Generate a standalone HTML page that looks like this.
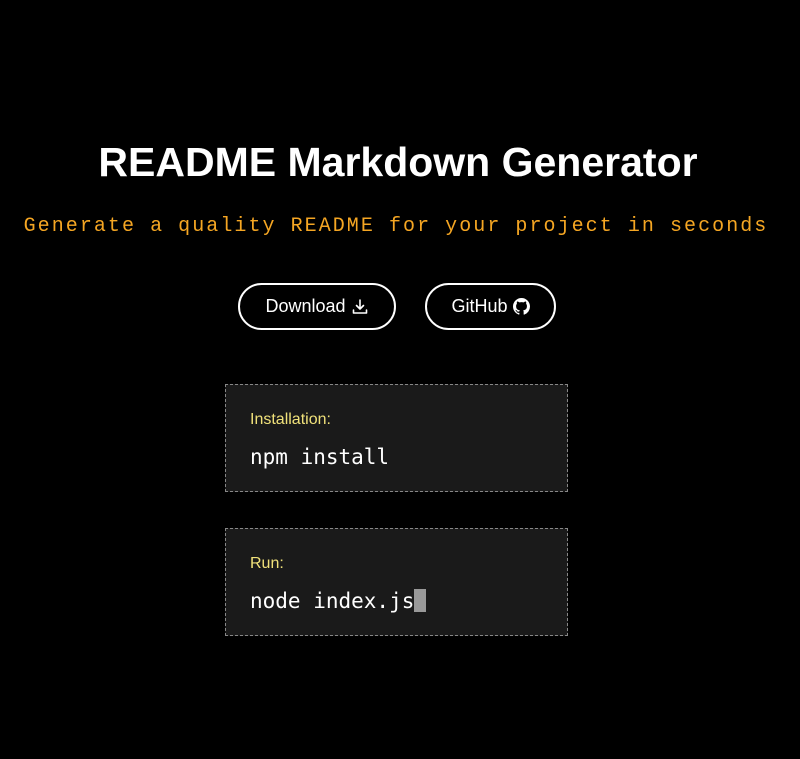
<!DOCTYPE html>
<html><head><meta charset="utf-8"><style>
html,body{margin:0;padding:0;background:#000;width:800px;height:759px;overflow:hidden}
body{font-family:"Liberation Sans",sans-serif;color:#fff;position:relative}
h1{position:absolute;top:139px;left:-2px;width:800px;margin:0;text-align:center;font-size:41px;font-weight:bold;line-height:46px}
.sub{position:absolute;top:214px;left:-4px;width:800px;text-align:center;font-family:"Courier New","Liberation Mono",monospace;font-size:20px;letter-spacing:2.05px;color:#f5a623;line-height:26px;white-space:nowrap}
.btn{position:absolute;top:283px;height:43px;border:2px solid #fff;border-radius:24px;box-sizing:content-box;display:flex;align-items:center;justify-content:center;font-size:18px;color:#fff}
.box{position:absolute;left:225px;width:341px;height:106px;background:#1a1a1a;border:1px dashed #888}
.lab{position:absolute;left:24px;top:26px;font-size:16px;color:#f0e17a}
.code{position:absolute;left:24px;top:58px;font-family:"DejaVu Sans Mono",monospace;font-size:21px;color:#fff;line-height:28px}
.cur{display:inline-block;width:12px;height:23px;background:#999;vertical-align:-4px}
</style></head><body>
<h1>README Markdown Generator</h1>
<div class="sub">Generate a quality README for your project in seconds</div>
<div class="btn" style="left:238px;width:154px">Download&nbsp;<svg width="18" height="18" viewBox="0 0 18 18" fill="none" stroke="#fff" stroke-width="1.6" stroke-linecap="round" stroke-linejoin="round"><path d="M9 2v9M5.5 7.5L9 11l3.5-3.5M2.5 12v3h13v-3"/></svg></div>
<div class="btn" style="left:425px;width:127px">GitHub&nbsp;<svg width="17" height="17" viewBox="0 0 16 16" fill="#fff"><path d="M8 0C3.58 0 0 3.58 0 8c0 3.54 2.290 6.530 5.47 7.59.4.07.55-.17.55-.38v-1.33c-2.23.48-2.7-1.07-2.7-1.07-.36-.92-.89-1.170-.89-1.17-.73-.5.06-.49.06-.49.8.06 1.23.83 1.23.83.71 1.22 1.87.87 2.33.66.07-.52.28-.87.51-1.07-1.78-.2-3.64-.89-3.64-3.95 0-.87.31-1.59.82-2.15-.08-.2-.36-1.02.08-2.12 0 0 .67-.21 2.2.82a7.6 7.6 0 014 0c1.53-1.04 2.2-.82 2.2-.82.44 1.1.16 1.92.08 2.12.51.56.82 1.27.82 2.15 0 3.07-1.87 3.75-3.65 3.95.29.25.54.73.54 1.48v2.2c0 .21.15.46.55.38A8 8 0 0016 8c0-4.42-3.580-8-8-8z"/></svg></div>
<div class="box" style="top:384px"><div class="lab">Installation:</div><div class="code">npm install</div></div>
<div class="box" style="top:528px"><div class="lab">Run:</div><div class="code">node index.js<span class="cur"></span></div></div>
</body></html>
